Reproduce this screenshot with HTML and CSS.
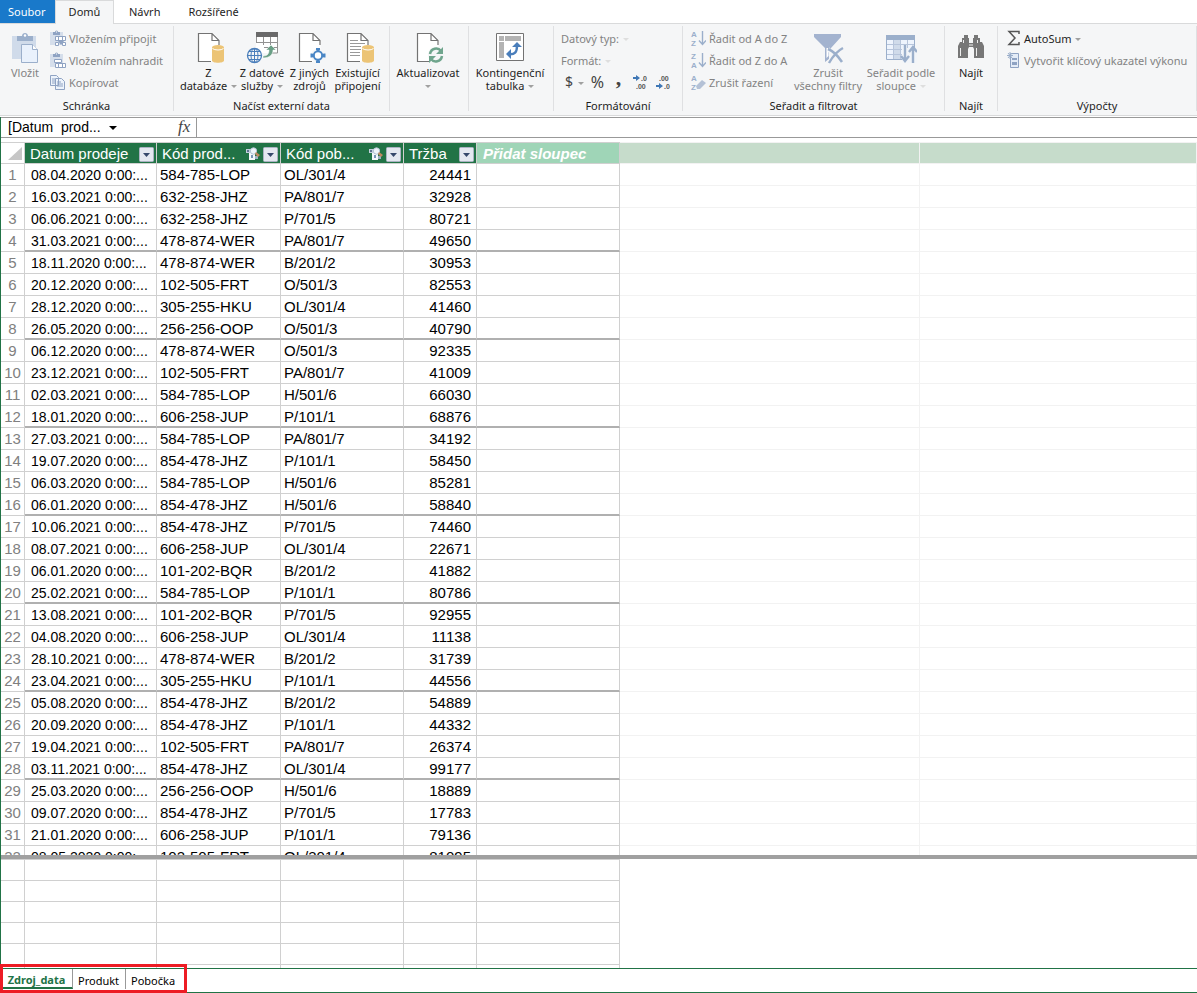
FILE: index.html
```html
<!DOCTYPE html>
<html lang="cs">
<head>
<meta charset="utf-8">
<title>Datový model</title>
<link rel="stylesheet" href="styles.css">
</head>
<body>
<svg class="defs" aria-hidden="true">
  <symbol id="page" viewBox="0 0 32 32"><path d="M5.500 1.500h15l6 6v22h-21z" fill="#fff"/><path d="M18 29.500H5.500V1.500H19l7 7V13M19 1.500v7h7" fill="none" stroke="#737373" stroke-width="1.200"/></symbol>
  <symbol id="drum" viewBox="0 0 12 18"><path d="M0 2.500v13c0 3 12 3 12 0v-13z" fill="#ecc476"/><ellipse cx="6" cy="2.500" rx="6" ry="2.500" fill="#ecc476"/><path d="M.500 3.500c2 2 9 2 11 0" fill="none" stroke="#fff" stroke-width="1"/></symbol>
  <symbol id="clip" viewBox="0 0 16 16"><path d="M0 2h13v13H0z" fill="#d5deeb"/><path d="M3 2h2a1.500 1.500 0 0 1 3 0h2v3H3z" fill="#8fa3c3"/><path d="M6 1.500h1v1H6z" fill="#fff"/></symbol>
  <symbol id="drop" viewBox="0 0 15 15"><rect x=".5" y=".5" width="14" height="14" rx="1" fill="#e4e8f0" stroke="#aab3c2"/><path d="M4 6h7l-3.500 4z" fill="#36486b"/></symbol>
  <symbol id="link" viewBox="0 0 14 14"><path d="M0 2h5v4H0z" fill="#c3cedc"/><path d="M1 3h2v2H1z" fill="#5f7391"/><path d="M3 6h6v7H3z" fill="#f4f7fa"/><path d="M5 8h2v3H5z" fill="#7893b5"/><path d="M9 9h3v3H9z" fill="#9fb0c4"/><circle cx="7.500" cy="4" r="3.200" fill="#eef4fa" stroke="#b3c3d4"/><path d="M10 5l4 3-2 2-3-3z" fill="#bf8860"/></symbol>
</svg>
<div class="app">
  <nav class="tabs" aria-label="Pás karet">
    <button class="tab file">Soubor</button>
    <button class="tab active">Domů</button>
    <button class="tab">Návrh</button>
    <button class="tab">Rozšířené</button>
  </nav>

  <div class="ribbon">
    <section class="group clipboard">
      <div class="tools">
        <button class="big paste" disabled>
          <svg width="32" height="32" viewBox="0 0 32 32"><path d="M3 4h24v23H3z" fill="#d0dbea"/><path d="M8 4h5c0-4 6-4 6 0h5v5H8z" fill="#9bafcb"/><circle cx="16" cy="3.500" r="1.200" fill="#fff"/><path d="M12.500 12.500h11l5 5v13h-16z" fill="#e9f1fc" stroke="#9bafcb"/><path d="M23.500 12.500v5h5" fill="#fff" stroke="#9bafcb"/></svg>
          <span>Vložit</span>
        </button>
        <div class="stack">
          <button class="small" disabled><svg width="16" height="16"><use href="#clip"/><path d="M5.500 6.500h10v4h-10zM8.500 6.500v4M12.500 6.500v4M5.500 12.500h3v3h-3zM12.500 12.500h3v3h-3z" fill="#fff" stroke="#8fa3c3"/><path d="M8 11h6l-3 4z" fill="#8fa3c3"/></svg><span>Vložením připojit</span></button>
          <button class="small" disabled><svg width="16" height="16"><use href="#clip"/><path d="M4.500 7.500h7v3h-7zM5.500 11.500h10v4h-10zM8.500 11.500v4M12.500 11.500v4" fill="#fff" stroke="#8fa3c3"/></svg><span>Vložením nahradit</span></button>
          <button class="small" disabled><svg width="16" height="16"><path d="M.5 1.500h6l2 2v8h-8zM5.500 4.500h6l3 3v8h-9z" fill="#edf3fb" stroke="#8fa3c3"/><path d="M2 5h3M2 7h3M2 9h3M7 8h4M7 10h6M7 12h6" stroke="#8fa3c3"/></svg><span>Kopírovat</span></button>
        </div>
      </div>
      <h2>Schránka</h2>
    </section>

    <section class="group external">
      <div class="tools">
        <button class="big w-db"><svg width="32" height="32"><use href="#page"/><use href="#drum" x="19" y="13" width="12" height="18"/></svg><span>Z<br>databáze <i class="arrow"></i></span></button>
        <button class="big w-service"><svg width="32" height="32"><path d="M10 1h22v20H10z" fill="#fff"/><path d="M10 0h22v5H10z" fill="#6a6a6a"/><path d="M10.500 5v6M31.500 5v16H26M17.500 5v8M24.500 5v8M10 10.500h21M18 15.500h13" fill="none" stroke="#929292"/><circle cx="8.500" cy="23.500" r="7" fill="#f5f6f7" stroke="#4a7ebb" stroke-width="1.300"/><path d="M1.500 23.500h14M8.500 16.500v14M3 19.500h11M3 27.500h11" stroke="#4a7ebb"/><ellipse cx="8.500" cy="23.500" rx="3.500" ry="7" fill="none" stroke="#4a7ebb"/><path d="M17 24c5 0 6-3 6-6h-3l5-5 5 5h-3c0 5-4 8-10 8z" fill="#6a9f86" stroke="#fff" stroke-width=".5"/></svg><span>Z datové<br>služby <i class="arrow"></i></span></button>
        <button class="big w-other"><svg width="32" height="32"><use href="#page"/><circle cx="24" cy="23.500" r="7" fill="#f5f6f7"/><circle cx="24" cy="23.500" r="4.200" fill="#fff" stroke="#4a86c5" stroke-width="2"/><path d="M22 16h4v2l-2 2-2-2zM22 31h4v-2l-2-2-2 2zM16.500 21.500h2l2 2-2 2h-2zM31.500 21.500h-2l-2 2 2 2h2z" fill="#4a86c5"/></svg><span>Z jiných<br>zdrojů</span></button>
        <button class="big w-existing"><svg width="32" height="32"><use href="#page"/><path d="M8 8.500h8M8 11.500h15M8 14.500h11M8 17.500h11M8 20.500h10M8 23.500h10" stroke="#999"/><use href="#drum" x="20" y="13" width="12" height="18"/></svg><span>Existující<br>připojení</span></button>
      </div>
      <h2>Načíst externí data</h2>
    </section>

    <section class="group refresh">
      <div class="tools centered">
        <button class="big"><svg width="32" height="32"><use href="#page"/><circle cx="24" cy="23" r="8" fill="#f5f6f7"/><path d="M18 22c1-6 8-7 11-3M30 24c-1 6-8 7-11 3" fill="none" stroke="#6fa58d" stroke-width="2.500"/><path d="M31 15v7h-7zM17 31v-7h7z" fill="#6fa58d"/></svg><span>Aktualizovat<br><i class="arrow"></i></span></button>
      </div>
    </section>

    <section class="group pivot">
      <div class="tools centered">
        <button class="big"><svg width="32" height="32"><path d="M2.500 1.500h27v27h-27z" fill="#fff" stroke="#737373"/><path d="M5 4h5v5H5zM11 4h16v5H11zM5 10h5v16H5z" fill="#b3b3b3"/><path d="M14 22c7 1 9-2 9-8" fill="none" stroke="#4a7ebb" stroke-width="2.400"/><path d="M18 15l5-5 5 5zM17 17v10l-5-5z" fill="#4a7ebb"/></svg><span>Kontingenční<br>tabulka <i class="arrow"></i></span></button>
      </div>
    </section>

    <section class="group format">
      <div class="tools">
        <div class="stack">
          <button class="small" disabled><span>Datový typ: <i class="arrow"></i></span></button>
          <button class="small" disabled><span>Formát: <i class="arrow"></i></span></button>
          <div class="numbers">
            <button class="sym dollar">$ <i class="arrow"></i></button>
            <button class="sym">%</button>
            <button class="comma">,</button>
            <button class="dec" aria-label="Přidat desetinné místo"><svg width="16" height="16"><path d="M0 3h3V1l4 3-4 3V5H0z" fill="#3f77b5"/><text x="8" y="7">.0</text><text x="3" y="15">.00</text></svg></button>
            <button class="dec" aria-label="Odebrat desetinné místo"><svg width="16" height="16"><path d="M0 11h3V9l4 3-4 3v-2H0z" fill="#3f77b5"/><text x="3" y="7">.00</text><text x="8" y="15">.0</text></svg></button>
          </div>
        </div>
      </div>
      <h2>Formátování</h2>
    </section>

    <section class="group sort">
      <div class="tools">
        <div class="stack">
          <button class="small" disabled><svg class="az" width="15" height="18"><text x="0" y="8">A</text><text x="0" y="17">Z</text><path d="M11.500 2v13M8 11.500l3.500 4 3.500-4" fill="none" stroke="#9bafcb" stroke-width="1.400"/></svg><span>Řadit od A do Z</span></button>
          <button class="small" disabled><svg class="az" width="15" height="18"><text x="0" y="8">Z</text><text x="0" y="17">A</text><path d="M11.500 2v13M8 11.500l3.500 4 3.500-4" fill="none" stroke="#9bafcb" stroke-width="1.400"/></svg><span>Řadit od Z do A</span></button>
          <button class="small" disabled><svg class="az" width="15" height="18"><text x="0" y="8">A</text><text x="0" y="17">Z</text><path d="M5 13l6-6 4 3-6 6H6z" fill="#b4c1d6"/></svg><span>Zrušit řazení</span></button>
        </div>
        <button class="big w-clear" disabled><svg width="32" height="32"><path d="M2 2h27v3L19 16v5l-2-2v8l-4 3V16L2 5z" fill="#a3b3cf"/><path d="M14.500 16v10l2-2v-8z" fill="#fff"/><path d="M16 17l14 13M31 16L16 31" stroke="#f5f6f7" stroke-width="4"/><path d="M16 17c5 2 10 7 14 13M31 16c-6 3-10 8-14 15" fill="none" stroke="#9bafcb" stroke-width="2.500"/></svg><span>Zrušit<br>všechny filtry</span></button>
        <button class="big w-sortby" disabled><svg width="32" height="32"><path d="M1.500 3.500h28v24h-28z" fill="#eef4fd" stroke="#9bafcb"/><path d="M8 7h7v20H8z" fill="#d0dbea"/><path d="M1 3h29v5H1z" fill="#9bafcb"/><path d="M8.500 8v19M15.500 8v19M22.500 8v19M2 12.500h27M2 17.500h27M2 22.500h27" stroke="#b7c5db"/><path d="M17 16h15v15H17z" fill="#f2f5f9"/><path d="M20 13v16M16 24l4 5 4-5M28 31V16M24 20l4-5 4 5" fill="none" stroke="#9bafcb" stroke-width="2.400"/></svg><span>Seřadit podle<br>sloupce <i class="arrow"></i></span></button>
      </div>
      <h2>Seřadit a filtrovat</h2>
    </section>

    <section class="group find">
      <div class="tools centered">
        <button class="big"><svg width="32" height="32"><path d="M3 26V14l2-4h2V6h2V3h4v3h1v5h4V6h1V3h4v3h2v4h2l2 4v12H19v-9l-1-2h-4l-1 2v9z" fill="#777"/><path d="M5.500 16v8M8.500 8v3M22.500 8v3M21.500 16v8M14 13h4" stroke="#eee"/></svg><span>Najít</span></button>
      </div>
      <h2>Najít</h2>
    </section>

    <section class="group calc">
      <div class="tools">
        <div class="stack">
          <button class="small dark"><svg width="14" height="16"><path d="M12 4V1.500H2L8 8l-6 6.500h10V12" fill="none" stroke="#555" stroke-width="1.500"/></svg><span>AutoSum <i class="arrow"></i></span></button>
          <button class="small" disabled><svg width="14" height="16"><path d="M3.500 1.500h8v14h-8z" fill="#e4ecf7" stroke="#8fa3c3"/><path d="M5 6h5v2H5zM5 10h5v3H5z" fill="#8fa3c3"/><path d="M3 0v7M0 3.500h6M1 1l4 5M5 1L1 6" stroke="#9bafcb"/></svg><span>Vytvořit klíčový ukazatel výkonu</span></button>
        </div>
      </div>
      <h2>Výpočty</h2>
    </section>
  </div>

  <main class="model">
    <div class="formula">
      <button class="name">[Datum&nbsp; prod... <i class="arrow"></i></button>
      <label class="fx" for="formula"><i>f</i>x</label>
      <input id="formula" type="text" aria-label="Řádek vzorců">
    </div>

    <div class="viewport">
      <table class="grid">
        <colgroup><col class="c-num"><col class="c-date"><col class="c-code"><col class="c-shop"><col class="c-sum"><col class="c-add"><col class="c-extra"><col></colgroup>
        <thead>
          <tr>
            <th class="corner"><svg width="14" height="14"><path d="M14 0v13H0z" fill="#c6c6c6"/></svg></th>
            <th><div class="head"><span>Datum prodeje</span><button aria-label="Filtr"><svg width="15" height="15"><use href="#drop"/></svg></button></div></th>
            <th><div class="head"><span>Kód prod...</span><svg width="14" height="14"><use href="#link"/></svg><button aria-label="Filtr"><svg width="15" height="15"><use href="#drop"/></svg></button></div></th>
            <th><div class="head"><span>Kód pob...</span><svg width="14" height="14"><use href="#link"/></svg><button aria-label="Filtr"><svg width="15" height="15"><use href="#drop"/></svg></button></div></th>
            <th><div class="head"><span>Tržba</span><button aria-label="Filtr"><svg width="15" height="15"><use href="#drop"/></svg></button></div></th>
            <th class="add">Přidat sloupec</th>
            <th class="pale"></th>
            <th class="pale"></th>
          </tr>
        </thead>
        <tbody id="rows"></tbody>
      </table>
    </div>

    <div class="measures">
      <table class="area">
        <colgroup><col class="c-num"><col class="c-date"><col class="c-code"><col class="c-shop"><col class="c-sum"><col class="c-add"></colgroup>
        <tbody>
          <tr><td></td><td></td><td></td><td></td><td></td><td></td></tr>
          <tr><td></td><td></td><td></td><td></td><td></td><td></td></tr>
          <tr><td></td><td></td><td></td><td></td><td></td><td></td></tr>
          <tr><td></td><td></td><td></td><td></td><td></td><td></td></tr>
          <tr><td></td><td></td><td></td><td></td><td></td><td></td></tr>
          <tr><td></td><td></td><td></td><td></td><td></td><td></td></tr>
        </tbody>
      </table>
    </div>

    <nav class="sheets" aria-label="Tabulky">
      <button class="sheet current">Zdroj_data</button>
      <button class="sheet">Produkt</button>
      <button class="sheet">Pobočka</button>
      <div class="marker"></div>
    </nav>
  </main>
</div>
<script src="rows.js"></script>
</body>
</html>
```
FILE: styles.css
```css
* { box-sizing: border-box; }
body { margin: 0; background: #fff; color: #1e1e1e; font: 11px/13px "Noto Sans", "Open Sans", sans-serif; }
button { margin: 0; padding: 0; border: 0; background: none; color: inherit; font: inherit; white-space: nowrap; }
.defs { position: absolute; width: 0; height: 0; }
.app { display: flex; flex-direction: column; height: 100vh; overflow: hidden; }

.tabs { display: flex; flex: none; height: 24px; border-bottom: 1px solid #d9dadb; }
.tab { height: 23px; padding: 0 13px 0 15px; }
.tab.file { width: 55px; padding: 0 0 0 8px; background: #1979ca; color: #fff; text-align: left; }
.tab.active { width: 59px; height: 24px; padding: 0 0 2px; background: #f5f6f7; border: 1px solid #d9dadb; border-width: 1px 1px 0; }

.ribbon { display: flex; flex: none; height: 92px; background: #f5f6f7; border-bottom: 1px solid #d9dadb; }
.group { display: flex; flex-direction: column; flex: none; margin: 2px 0 4px; padding-top: 1px; border-right: 1px solid #dfe0e2; }
.group h2 { margin: auto 0 0; font: inherit; line-height: 11px; text-align: center; white-space: nowrap; }
.tools { display: flex; }
.centered { justify-content: center; }
.clipboard { width: 174px; }
.external { width: 216px; }
.external .tools { padding-left: 6px; }
.refresh { width: 79px; padding-right: 2px; }
.pivot { width: 85px; padding-right: 2px; }
.format { width: 129px; }
.format .tools { padding-left: 7px; }
.sort { width: 262px; }
.sort .tools { padding-left: 8px; }
.find { width: 53px; }
.calc { flex: 1; }
.calc .tools { padding-left: 9px; }
.big { display: flex; flex-direction: column; align-items: center; flex: none; gap: 2px; padding-top: 5px; color: #1e1e1e; text-align: center; }
.paste { width: 50px; }
.w-db { width: 57px; }
.w-service { width: 50px; }
.w-other { width: 45px; }
.w-existing { width: 51px; }
.w-clear { width: 70px; }
.w-sortby { width: 76px; }
.stack { display: flex; flex-direction: column; align-items: flex-start; }
.sort .stack { width: 102px; }
.small { display: flex; align-items: center; gap: 3px; height: 22px; }
.small svg { flex: none; }
button:disabled { color: #838383; }
button:disabled .arrow { color: #dedede; }
.arrow { display: inline-block; margin-left: 1px; border: 3px solid transparent; border-top-color: currentColor; border-bottom: 0; vertical-align: 2px; color: #a0a0a0; }
.numbers { display: flex; align-items: center; height: 22px; padding-left: 4px; gap: 7px; color: #444; }
.sym { font-size: 16px; line-height: 20px; }
.dollar { font-size: 14px; }
.comma { width: 15px; height: 20px; padding-bottom: 8px; font: bold 22px/12px "Liberation Serif", serif; }
.dec { height: 16px; }
.dec svg { display: block; }
.dec text { font: bold 7px "Liberation Sans", sans-serif; fill: #555; }
.az text { font: bold 8px "Liberation Sans", sans-serif; fill: #9bafcb; }

.model { display: flex; flex: 1; flex-direction: column; min-height: 0; margin-top: 1px; border-left: 1px solid #217346; }
.formula { display: flex; flex: none; height: 21px; margin-bottom: 4px; border: 1px solid #999; border-width: 1px 0; font: 14px/19px "Liberation Sans", sans-serif; color: #000; }
.name { width: 168px; padding-left: 7px; text-align: left; }
.name .arrow { margin-left: 5px; border-width: 4px; border-bottom: 0; color: #000; }
.fx { width: 28px; padding-left: 9px; border-right: 1px solid #999; font: italic 17px/17px "Liberation Serif", serif; color: #444; }
.formula input { flex: 1; min-width: 0; border: 0; padding: 0 4px; outline: 0; font: inherit; }

.viewport { flex: 1; min-height: 0; overflow: hidden; border-bottom: 4px solid #a0a0a0; }
table { border-collapse: separate; border-spacing: 0; table-layout: fixed; font: 15px/18px "Liberation Sans", sans-serif; color: #000; }
.grid { width: 100%; }
.c-num { width: 24px; }
.c-date { width: 132px; }
.c-code { width: 124px; }
.c-shop { width: 123px; }
.c-sum { width: 73px; }
.c-add { width: 143px; }
.c-extra { width: 300px; }
th, td { height: 22px; padding: 2px 3px 0; overflow: hidden; border: 0 solid #d0d0d0; border-width: 0 1px 1px 0; font-weight: normal; text-align: left; vertical-align: top; white-space: nowrap; }
.grid thead th { border-top-width: 1px; background: #217346; color: #fff; }
.grid thead .corner { background: #fff; text-align: right; padding: 2px 2px 0 0; }
.corner svg { display: block; margin-left: auto; margin-top: 2px; }
.grid thead .add { padding-left: 6px; background: #9fd5b7; font-weight: bold; font-style: italic; }
.grid thead .pale { background: #c6dccb; border-color: #f2f2f2; }
.head { display: flex; align-items: center; gap: 3px; padding-left: 2px; margin-right: -1px; }
.head span { flex: 1; }
.head svg { display: block; }
.grid tbody th { padding: 2px 0 0; text-align: center; color: #808080; }
.grid .date { padding-left: 6px; font-size: 14px; }
.grid .sum { padding-right: 5px; text-align: right; }
.grid .pale { border-color: #f2f2f2; }
.grid .fourth td:not(.pale) { border-bottom: 2px solid #b0b0b0; }
.measures { flex: none; height: 109px; overflow: hidden; }
.area { width: 619px; border-top: 1px solid #d0d0d0; }
.area td { height: 21px; }

.sheets { position: relative; display: flex; flex: none; height: 25px; border: 1px solid #217346; border-width: 1px 0; color: #000; }
.sheet { height: 20px; padding: 2px 6px 0 5px; border-right: 1px solid #999; }
.sheet.current { width: 72px; padding: 3px 0 0; border-bottom: 2px solid #217346; color: #217346; font-weight: bold; }
.sheet:last-of-type { border-right: 0; }
.marker { position: absolute; left: -1px; top: -5px; width: 187px; height: 29px; border: 3px solid #ed1c24; pointer-events: none; }
```
FILE: rows.js
```js
const data = `08.04.2020,584-785-LOP,OL/301/4,24441
16.03.2021,632-258-JHZ,PA/801/7,32928
06.06.2021,632-258-JHZ,P/701/5,80721
31.03.2021,478-874-WER,PA/801/7,49650
18.11.2020,478-874-WER,B/201/2,30953
20.12.2020,102-505-FRT,O/501/3,82553
28.12.2020,305-255-HKU,OL/301/4,41460
26.05.2020,256-256-OOP,O/501/3,40790
06.12.2020,478-874-WER,O/501/3,92335
23.12.2021,102-505-FRT,PA/801/7,41009
02.03.2021,584-785-LOP,H/501/6,66030
18.01.2020,606-258-JUP,P/101/1,68876
27.03.2021,584-785-LOP,PA/801/7,34192
19.07.2020,854-478-JHZ,P/101/1,58450
06.03.2020,584-785-LOP,H/501/6,85281
06.01.2020,854-478-JHZ,H/501/6,58840
10.06.2021,854-478-JHZ,P/701/5,74460
08.07.2021,606-258-JUP,OL/301/4,22671
06.01.2020,101-202-BQR,B/201/2,41882
25.02.2021,584-785-LOP,P/101/1,80786
13.08.2021,101-202-BQR,P/701/5,92955
04.08.2020,606-258-JUP,OL/301/4,11138
28.10.2021,478-874-WER,B/201/2,31739
23.04.2021,305-255-HKU,P/101/1,44556
05.08.2020,854-478-JHZ,B/201/2,54889
20.09.2020,854-478-JHZ,P/101/1,44332
19.04.2021,102-505-FRT,PA/801/7,26374
03.11.2021,854-478-JHZ,OL/301/4,99177
25.03.2020,256-256-OOP,H/501/6,18889
09.07.2020,854-478-JHZ,P/701/5,17783
21.01.2020,606-258-JUP,P/101/1,79136
08.05.2020,102-505-FRT,OL/301/4,81095`;

document.getElementById("rows").innerHTML = data.split("\n").map((line, i) => {
  const [date, code, shop, sum] = line.split(",");
  const kind = (i + 1) % 4 === 0 ? ' class="fourth"' : "";
  return `<tr${kind}><th scope="row">${i + 1}</th><td class="date">${date} 0:00:...</td><td>${code}</td><td>${shop}</td><td class="sum">${sum}</td><td></td><td class="pale"></td><td class="pale"></td></tr>`;
}).join("");
```
